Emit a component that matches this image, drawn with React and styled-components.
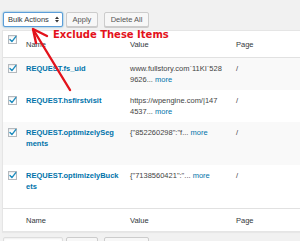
import React from "react";
import styled, { createGlobalStyle } from "styled-components";

const GlobalStyle = createGlobalStyle`
  html, body { margin: 0; padding: 0; background: #f1f1f1; }
  body { font-family: "Liberation Sans", Arial, sans-serif; overflow: hidden; }
`;

const Page = styled.div`
  position: relative;
  width: 300px;
  height: 241px;
  overflow: hidden;
  background: #f1f1f1;
`;

const TableNav = styled.div`
  display: flex;
  align-items: center;
  padding: ${(p) => (p.$top ? "12px 0 3px 3px" : "5px 0 0 3px")};
`;

const Select = styled.div`
  box-sizing: border-box;
  width: 60px;
  height: 15px;
  display: flex;
  align-items: center;
  justify-content: space-between;
  padding: 0 3px 0 4px;
  background: #fff;
  border: 1px solid ${(p) => (p.$focus ? "#5b9dd9" : "#ddd")};
  box-shadow: ${(p) => (p.$focus ? "0 0 2px rgba(30,140,190,.8)" : "inset 0 1px 2px rgba(0,0,0,.07)")};
  border-radius: 2px;
  font-size: 7.5px;
  color: #32373c;
`;

const Button = styled.div`
  box-sizing: border-box;
  width: ${(p) => p.$w}px;
  height: 15px;
  margin-left: ${(p) => p.$ml}px;
  display: flex;
  align-items: center;
  justify-content: center;
  background: #f7f7f7;
  border: 1px solid #ccc;
  border-radius: 2px;
  box-shadow: 0 1px 0 #ccc;
  font-size: 7.5px;
  color: #555;
`;

const Table = styled.table`
  margin-left: 2px;
  width: 318px;
  border: 1px solid #e5e5e5;
  border-spacing: 0;
  background: #fff;
  table-layout: fixed;
  font-size: 7.5px;
  line-height: 11px;
  color: #444;
  box-shadow: 0 1px 1px rgba(0, 0, 0, 0.04);
`;

const Col = styled.col`
  width: ${(p) => p.$w}px;
`;

const Th = styled.th`
  text-align: left;
  font-weight: normal;
  color: #32373c;
  vertical-align: top;
  padding: ${(p) => (p.$foot ? "6px 6px 5px" : "8px 6px 7px")};
  border-bottom: ${(p) => (p.$foot ? "none" : "1px solid #e1e1e1")};
  border-top: ${(p) => (p.$foot ? "1px solid #e1e1e1" : "none")};
`;

const CheckTh = styled(Th)`
  padding: 4px 0 0 5px;
`;

const Row = styled.tr`
  background: ${(p) => (p.$alt ? "#f9f9f9" : "#fff")};
`;

const Td = styled.td`
  vertical-align: top;
  padding: 5px 6px;
  white-space: nowrap;
  overflow: visible;
`;

const CheckTd = styled.td`
  vertical-align: top;
  padding: 6px 0 0 5px;
`;

const NameLink = styled.strong`
  display: block;
  color: #0073aa;
  font-weight: bold;
`;

const RowActions = styled.div`
  visibility: hidden;
`;

const More = styled.span`
  color: #0073aa;
`;

const Box = styled.span`
  display: block;
  box-sizing: border-box;
  width: 9px;
  height: 9px;
  background: #fff;
  border: 1px solid #b4b9be;
  box-shadow: inset 0 1px 2px rgba(0, 0, 0, 0.1);
  position: relative;
`;

const CheckMark = styled.svg`
  position: absolute;
  left: -1px;
  top: -1px;
`;

const Note = styled.div`
  position: absolute;
  left: 53px;
  top: 30px;
  font-family: "DejaVu Sans", Verdana, sans-serif;
  font-weight: bold;
  font-size: 10px;
  line-height: 10px;
  color: #e3121b;
  white-space: nowrap;
`;

const Overlay = styled.svg`
  position: absolute;
  left: 0;
  top: 0;
  pointer-events: none;
`;

const Checkbox = () => (
  <Box>
    <CheckMark width="9" height="9" viewBox="0 0 9 9">
      <path d="M2 4.6 L3.9 6.6 L7.8 1.6" fill="none" stroke="#1e8cbe" strokeWidth="1.4" strokeLinecap="round" strokeLinejoin="round" />
    </CheckMark>
  </Box>
);

const SelectArrows = () => (
  <svg width="4" height="7" viewBox="0 0 4 7">
    <path d="M0 3 L2 0.5 L4 3 Z M0 4 L2 6.5 L4 4 Z" fill="#333" />
  </svg>
);

const rows = [
  { name: ["REQUEST.fs_uid"], value: ["www.fullstory.com`11KI`528", "9626"] },
  { name: ["REQUEST.hsfirstvisit"], value: ["https://wpengine.com/|147", "4537"] },
  { name: ["REQUEST.optimizelySeg", "ments"], value: ['{"852260298":"f'] },
  { name: ["REQUEST.optimizelyBuck", "ets"], value: ['{"7138560421":"'] },
];

const Lines = ({ parts }) =>
  parts.map((n, j) => (
    <React.Fragment key={j}>
      {j > 0 && <br />}
      {n}
    </React.Fragment>
  ));

const Controls = ({ top }) => (
  <TableNav $top={top}>
    <Select $focus={top}>
      <span>Bulk Actions</span>
      <SelectArrows />
    </Select>
    <Button $w={32} $ml={3}>Apply</Button>
    <Button $w={45} $ml={6}>Delete All</Button>
  </TableNav>
);

export default function App() {
  return (
    <>
      <GlobalStyle />
      <Page>
        <Controls top />
        <Table>
          <colgroup>
            <Col $w={17} />
            <Col $w={104} />
            <Col $w={106} />
            <Col />
          </colgroup>
          <thead>
            <tr>
              <CheckTh><Checkbox /></CheckTh>
              <Th>Name</Th>
              <Th>Value</Th>
              <Th>Page</Th>
            </tr>
          </thead>
          <tbody>
            {rows.map((r, i) => (
              <Row key={i} $alt={i % 2 === 0}>
                <CheckTd><Checkbox /></CheckTd>
                <Td>
                  <NameLink><Lines parts={r.name} /></NameLink>
                  <RowActions>Delete</RowActions>
                </Td>
                <Td>
                  <Lines parts={r.value} />... <More>more</More>
                </Td>
                <Td>/</Td>
              </Row>
            ))}
          </tbody>
          <tfoot>
            <tr>
              <Th $foot></Th>
              <Th $foot>Name</Th>
              <Th $foot>Value</Th>
              <Th $foot>Page</Th>
            </tr>
          </tfoot>
        </Table>
        <Controls />
        <Note>Exclude These Items</Note>
        <Overlay width="300" height="241" viewBox="0 0 300 241">
          <path d="M70 90 L33.5 30" stroke="#e3121b" strokeWidth="2.4" strokeLinecap="round" fill="none" />
          <path d="M36 43 L33 29 L47 36" stroke="#e3121b" strokeWidth="2.4" strokeLinecap="round" strokeLinejoin="round" fill="none" />
        </Overlay>
      </Page>
    </>
  );
}
